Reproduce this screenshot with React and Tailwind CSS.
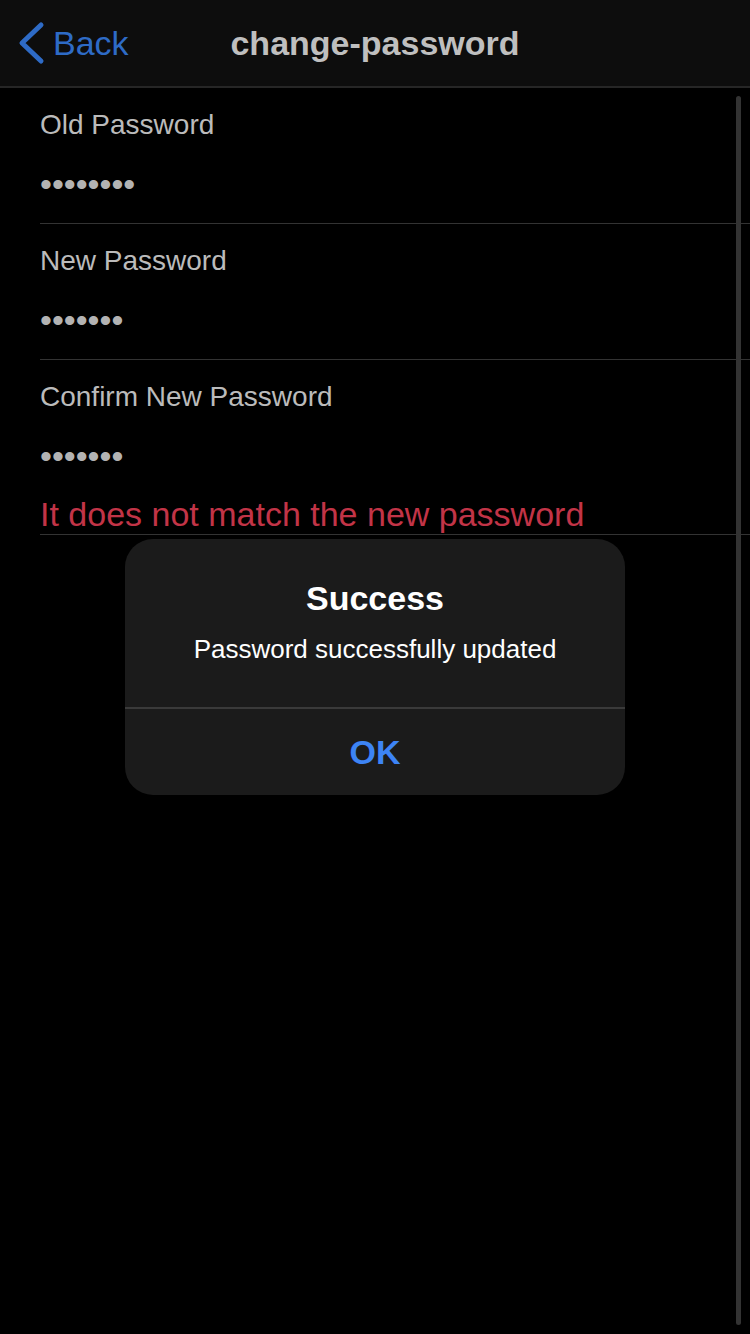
import React from 'react';

const font = { fontFamily: '"Liberation Sans", Arial, sans-serif' };

const Field = ({ label, dots, error }) => (
    <div className="ml-[40px] pt-[21px] border-b border-[#333333]">
        <div className="text-[28px] leading-[32px] text-[#bbbbbb]">{label}</div>
        <div className="h-[82px] pt-[5px] flex items-center text-[34px] text-[#b3b3b3]">
            {'•'.repeat(dots)}
        </div>
        {error && (
            <div className="text-[34px] leading-[40px] text-[#c23447] -mt-[1px]">{error}</div>
        )}
    </div>
);

const App = () => {
    return (
        <div className="relative w-[750px] h-[1334px] bg-black overflow-hidden" style={font}>
            {/* Header */}
            <div className="h-[88px] bg-[#0d0d0d] border-b-2 border-[#262626] flex items-center relative">
                <div className="flex items-center pl-[17px] gap-[8px] -mt-[1px] text-[#2e6bc6]">
                    <svg width="28" height="44" viewBox="0 0 28 44" fill="none">
                        <path d="M24 4 L5 22 L24 40" stroke="#2e6bc6" strokeWidth="5" strokeLinecap="round" strokeLinejoin="round" />
                    </svg>
                    <span className="text-[34px] leading-none">Back</span>
                </div>
                <div className="absolute inset-0 flex items-center justify-center pointer-events-none -mt-[1px]">
                    <span className="text-[34px] font-bold text-[#bfbfbf] leading-none">change-password</span>
                </div>
            </div>

            {/* Form */}
            <Field label="Old Password" dots={8} />
            <Field label="New Password" dots={7} />
            <Field label="Confirm New Password" dots={7} error="It does not match the new password" />

            {/* Scroll indicator */}
            <div className="absolute right-[9px] top-[96px] w-[5px] h-[1229px] rounded-full bg-[#333333]" />

            {/* Alert */}
            <div className="absolute inset-0 flex items-center justify-center">
                <div className="w-[500px] h-[256px] bg-[#1b1b1b] rounded-[28px] flex flex-col overflow-hidden">
                    <div className="flex-1 flex flex-col items-center pt-[39px]">
                        <div className="text-[34px] leading-[40px] font-bold text-white">Success</div>
                        <div className="text-[26px] leading-[30px] text-white mt-[16px]">Password successfully updated</div>
                    </div>
                    <div className="h-[2px] bg-[#3a3a3a]" />
                    <div className="h-[86px] flex items-center justify-center text-[34px] font-bold text-[#3d84f5]">OK</div>
                </div>
            </div>
        </div>
    );
};

export default App;
